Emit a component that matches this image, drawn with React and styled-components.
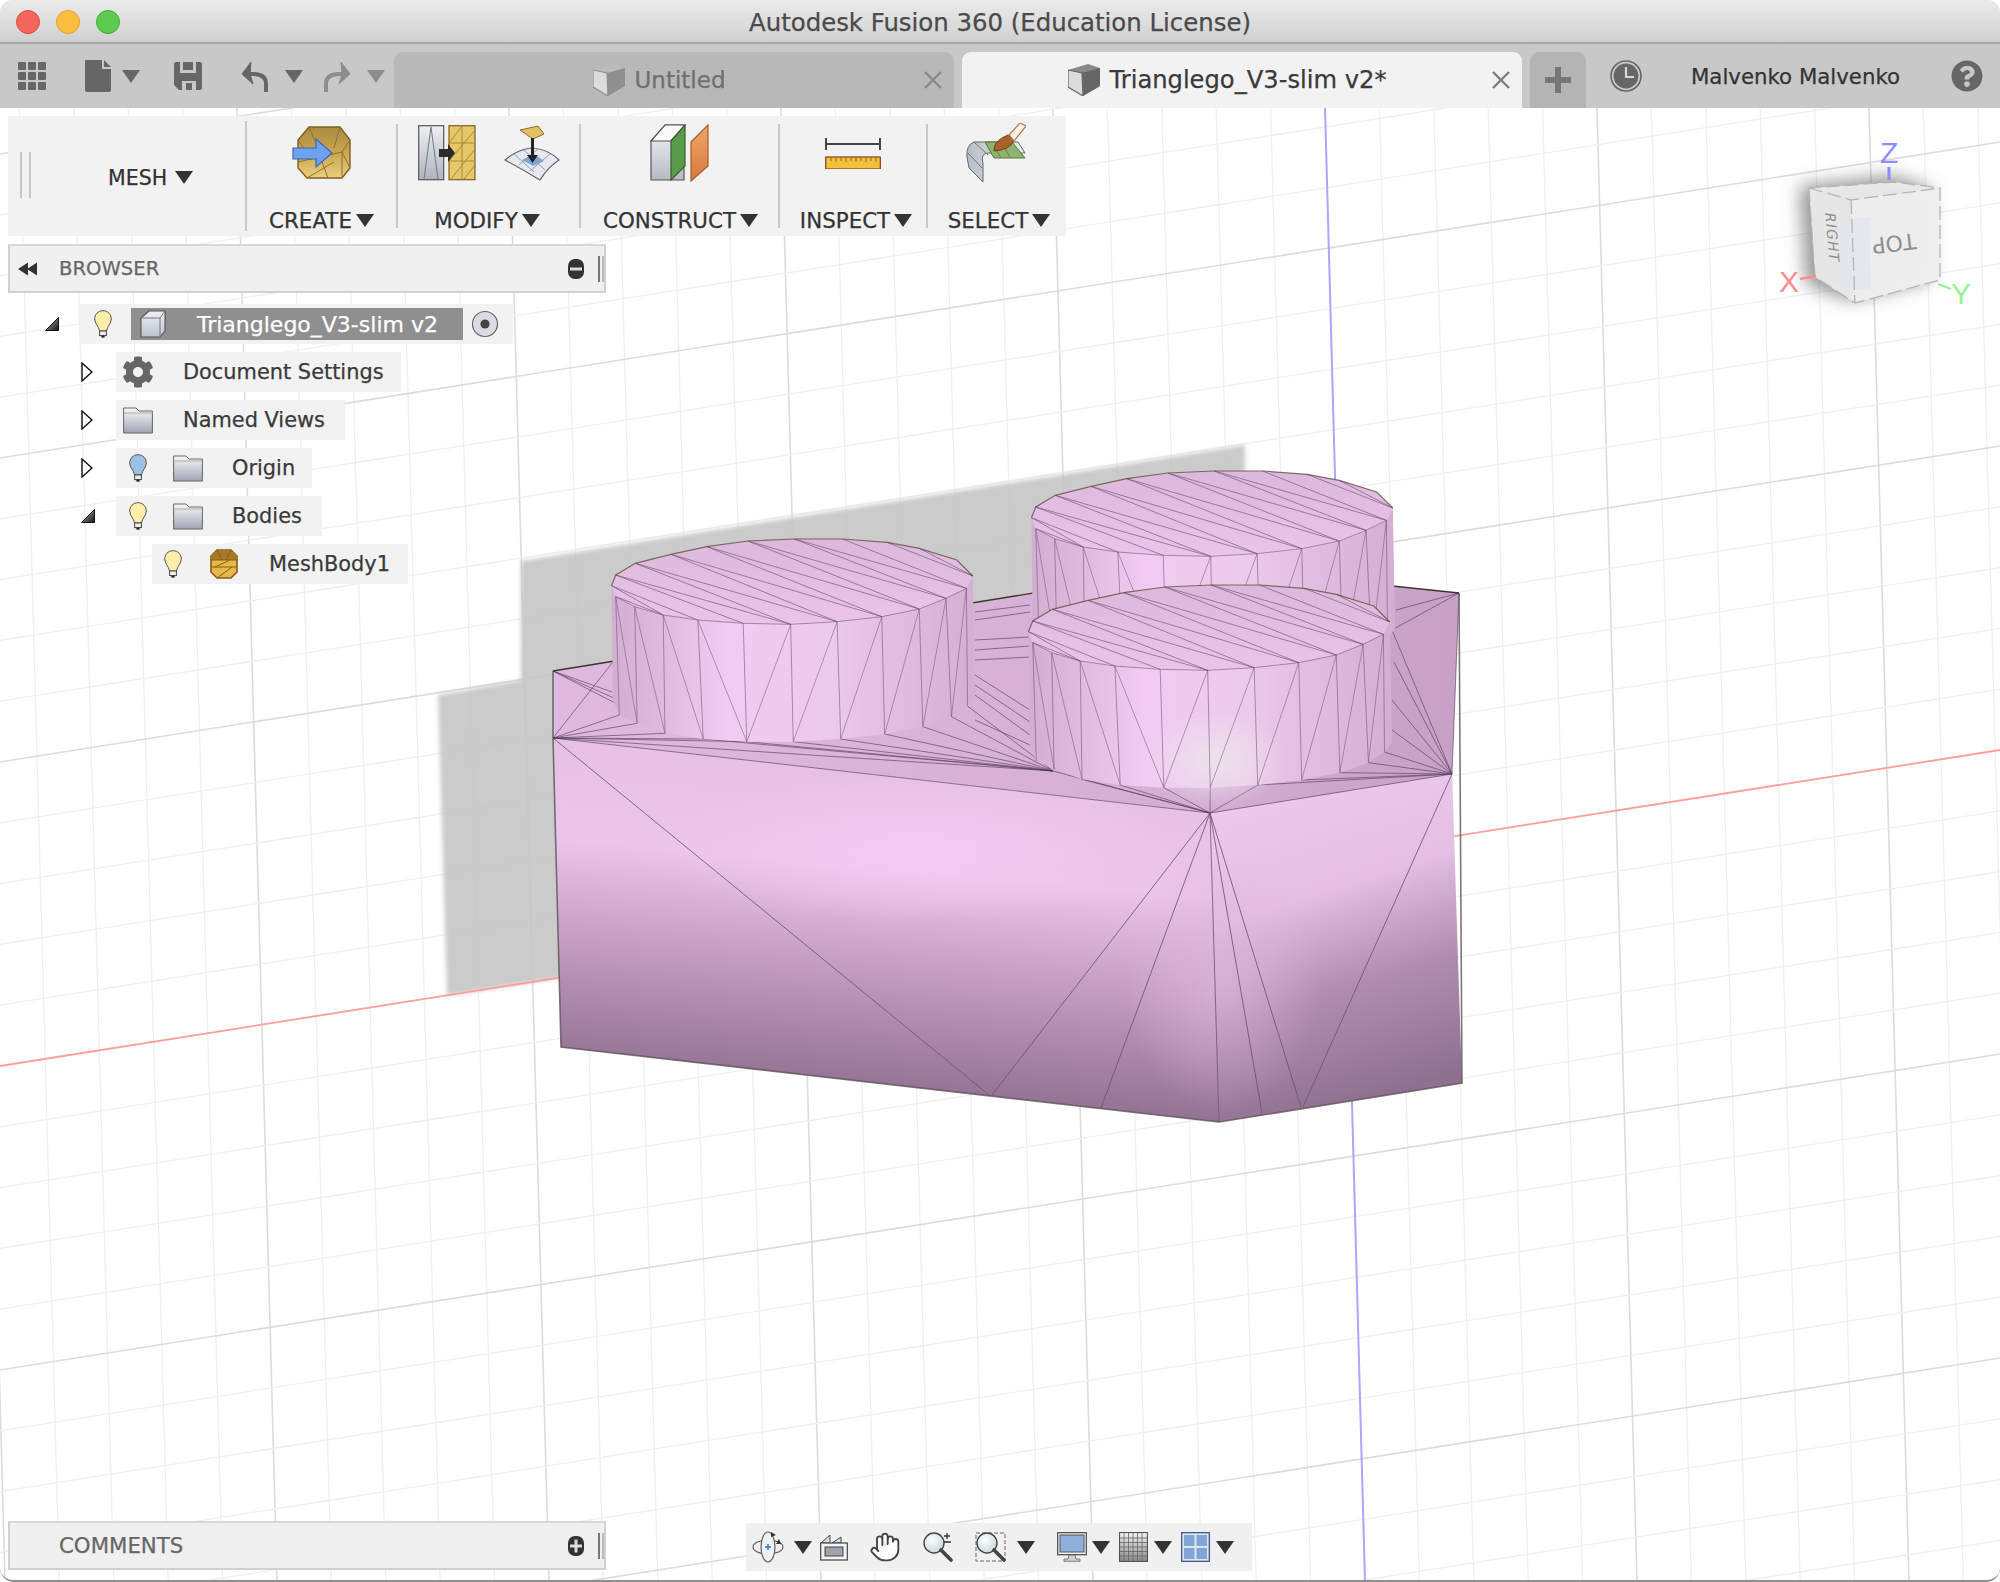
import React from "react";
import styled, { createGlobalStyle } from "styled-components";
import { FaCog, FaQuestionCircle } from "react-icons/fa";
import { Hand } from "lucide-react";

const GlobalStyle = createGlobalStyle`
  html, body { margin: 0; padding: 0; background: #fff; }
  * { box-sizing: border-box; }
  body {
    font-family: "DejaVu Sans", "Liberation Sans", sans-serif;
    -webkit-text-stroke: 0.25px currentColor;
  }
`;

const Window = styled.div`
  width: 2000px;
  height: 1582px;
  display: flex;
  flex-direction: column;
  overflow: hidden;
  border-radius: 12px 12px 14px 14px;
  border-bottom: 2px solid #8f8f8f;
  background: #fff;
`;

const TitleBar = styled.div`
  height: 44px;
  flex: none;
  display: flex;
  align-items: center;
  position: relative;
  justify-content: center;
  padding-top: 3px;
  background: linear-gradient(#ebebeb, #d0d0d0);
  border-bottom: 2px solid #a8a8a8;
`;

const Lights = styled.div`
  position: absolute;
  left: 16px;
  top: 10px;
  display: flex;
  gap: 16px;
`;

const Light = styled.span`
  width: 24px;
  height: 24px;
  border-radius: 50%;
  background: ${(p) => p.$color};
  border: 1px solid ${(p) => p.$edge};
`;

const Title = styled.div`
  font-size: 24.4px;
  color: #4a4a4a;
`;

const TabBar = styled.div`
  height: 64px;
  flex: none;
  display: flex;
  align-items: flex-end;
  background: #c8c8c8;
`;

const Tools = styled.div`
  width: 394px;
  height: 64px;
  flex: none;
  display: flex;
  align-items: center;
  padding: 0 0 0 18px;
`;

const Slot = styled.span`
  display: flex;
  align-items: center;
  justify-content: center;
  flex: none;
  margin-left: ${(p) => p.$ml || 0}px;
`;

const Caret = styled.span`
  display: block;
  flex: none;
  width: 0;
  height: 0;
  border-left: ${(p) => (p.$w || 18) / 2}px solid transparent;
  border-right: ${(p) => (p.$w || 18) / 2}px solid transparent;
  border-top: ${(p) => p.$h || 13}px solid ${(p) => p.$color || "#333"};
  margin-left: ${(p) => p.$ml || 0}px;
`;

const Tab = styled.div`
  width: ${(p) => p.$w}px;
  height: 56px;
  flex: none;
  display: flex;
  align-items: center;
  margin-right: 8px;
  border-radius: 9px 9px 0 0;
  padding-right: 12px;
  background: ${(p) => (p.$active ? "#f2f2f2" : "#b8b8b8")};
`;

const TabLabel = styled.div`
  flex: 1;
  display: flex;
  align-items: center;
  justify-content: center;
  gap: 10px;
  font-size: ${(p) => (p.$active ? 24.2 : 23)}px;
  color: ${(p) => (p.$active ? "#3a3a3a" : "#6f6f6f")};
`;

const PlusTab = styled.div`
  width: 56px;
  height: 56px;
  flex: none;
  display: flex;
  align-items: center;
  justify-content: center;
  border-radius: 9px 9px 0 0;
  background: #b4b4b4;
`;

const UserArea = styled.div`
  height: 64px;
  display: flex;
  align-items: center;
`;

const UserName = styled.div`
  margin-left: 49px;
  width: 208px;
  font-size: 21.3px;
  color: #333;
  white-space: nowrap;
`;

const Viewport = styled.div`
  position: relative;
  flex: 1;
  min-height: 0;
  display: flex;
  flex-direction: column;
  overflow: hidden;
  padding-left: 8px;
`;

const Scene = styled.svg`
  position: absolute;
  left: 0;
  top: 0;
`;

const Toolbar = styled.div`
  position: relative;
  flex: none;
  width: 1058px;
  height: 120px;
  margin-top: 8px;
  display: flex;
  background: #f2f2f2;
`;

const MeshGroup = styled.div`
  width: 237px;
  display: flex;
  align-items: center;
  padding: 0 0 0 12px;
`;

const Grip = styled.span`
  flex: none;
  width: 11px;
  height: 46px;
  border-left: 2px solid #c6c6c6;
  border-right: 2px solid #c6c6c6;
  margin-top: -2px;
`;

const MeshLabel = styled.div`
  display: flex;
  align-items: center;
  margin-left: 77px;
  margin-top: 3px;
  font-size: 20.5px;
  color: #333;
`;

const Sep = styled.span`
  flex: none;
  width: 2px;
  height: ${(p) => p.$h || 104}px;
  align-self: center;
  background: #c9c9c9;
`;

const ToolGroup = styled.div`
  width: ${(p) => p.$w}px;
  flex: none;
  display: flex;
  flex-direction: column;
  align-items: center;
`;

const GroupIcons = styled.div`
  height: 92px;
  display: flex;
  align-items: center;
  justify-content: center;
  gap: 28px;
  padding-bottom: 18px;
`;

const GroupLabel = styled.div`
  display: flex;
  align-items: center;
  gap: 4px;
  font-size: 21.4px;
  color: #333;
  margin-left: ${(p) => p.$ml || 0}px;
  white-space: nowrap;
`;

const Panel = styled.div`
  position: relative;
  flex: none;
  width: 598px;
  height: 49px;
  display: flex;
  align-items: center;
  background: #f0f0f0;
  border: 2px solid #d0d0d0;
  border-top-color: #d8d8d8;
  padding-left: 8px;
`;

const BrowserPanel = styled(Panel)`
  margin-top: 8px;
`;

const PanelName = styled.div`
  flex: 1;
  font-size: ${(p) => p.$fs}px;
  color: #666;
  margin-left: ${(p) => p.$ml}px;
`;

const PanelGrip = styled.span`
  width: 6px;
  height: 26px;
  margin: 0 0 0 14px;
  border-left: 2px solid #777;
  border-right: 2px solid #bbb;
`;

const Tree = styled.div`
  flex: none;
  margin-top: 11px;
  display: flex;
  flex-direction: column;
  gap: 8px;
  position: relative;
`;

const TreeRow = styled.div`
  display: flex;
  align-items: center;
  height: 40px;
  padding-left: ${(p) => 37 + p.$level * 36}px;
`;

const Expander = styled.span`
  width: 35px;
  flex: none;
  display: flex;
`;

const RowBox = styled.div`
  display: flex;
  align-items: center;
  height: 40px;
  background: #f2f2f2;
  padding-left: ${(p) => p.$pl}px;
  padding-right: ${(p) => p.$pr}px;
  margin-left: ${(p) => p.$ml || 0}px;
`;

const RowText = styled.span`
  margin-left: ${(p) => p.$ml}px;
  font-size: 20.9px;
  color: #3a3a3a;
  white-space: nowrap;
`;

const RootLabel = styled.div`
  width: 332px;
  height: 32px;
  display: flex;
  align-items: center;
  margin-left: 19px;
  padding-left: 9px;
  background: #8f8f8f;
  color: #fff;
  font-size: 22px;
`;

const RootText = styled.span`
  margin-left: 31px;
  white-space: nowrap;
`;

const Spacer = styled.div`
  flex: 1;
`;

const BottomRow = styled.div`
  position: relative;
  flex: none;
  display: flex;
  align-items: flex-start;
  margin-bottom: 9px;
`;

const NavBar = styled.div`
  margin-left: 140px;
  margin-top: 2px;
  width: 506px;
  height: 48px;
  display: flex;
  align-items: center;
  background: #f0f0f0;
`;

/* ---------- small icons ---------- */

const AppsIcon = () => (
  <svg width="28" height="28" viewBox="0 0 28 28" fill="#666">
    {[0, 10, 20].map((y) =>
      [0, 10, 20].map((x) => <rect key={`${x}-${y}`} x={x} y={y} width="8" height="8" rx="1" />)
    )}
  </svg>
);

const DocIcon = () => (
  <svg width="26" height="32" viewBox="0 0 26 32">
    <path d="M1 0H17V9H26V30Q26 32 24 32H2Q0 32 0 30V1Q0 0 1 0Z" fill="#666" />
    <path d="M19 0L26 7H19Z" fill="#666" />
  </svg>
);

const SaveIcon = () => (
  <svg width="28" height="28" viewBox="0 0 28 28">
    <path d="M2 0H26Q28 0 28 2V26Q28 28 26 28H5L0 23V2Q0 0 2 0Z" fill="#666" />
    <path d="M6 0H22V11H6Z" fill="#c8c8c8" />
    <path d="M9 0H19V8H9Z" fill="#666" />
    <path d="M8 19H22V28H8Z" fill="#c8c8c8" />
    <path d="M12 21H18V28H12Z" fill="#666" />
  </svg>
);

const ArrowIcon = ({ flip, color }) => (
  <svg width="27" height="32" viewBox="0 0 27 32" style={flip ? { transform: "scaleX(-1)" } : undefined}>
    <path d="M25 32V24Q25 14 12 14H6" fill="none" stroke={color} strokeWidth="4" />
    <path d="M10 2L1 14L12 24L9 14Z" fill={color} stroke={color} strokeWidth="1" />
  </svg>
);

const DocCube = ({ face, side }) => (
  <svg width="32" height="32" viewBox="0 0 32 32">
    <path d="M0 6L20 0L32 4V22L15 32L0 23Z" fill={face} />
    <path d="M14 9L32 4V22L15 32Z" fill={side} />
    <path d="M0 6L14 9L15 32L0 23Z" fill="#dcdcdc" stroke={side} strokeWidth="1.2" />
  </svg>
);

const CloseIcon = ({ color }) => (
  <svg width="18" height="18" viewBox="0 0 18 18">
    <path d="M1 1L17 17M17 1L1 17" stroke={color} strokeWidth="2.4" />
  </svg>
);

const PlusIcon = () => (
  <svg width="26" height="26" viewBox="0 0 26 26">
    <path d="M10 0H16V10H26V16H16V26H10V16H0V10H10Z" fill="#777" />
  </svg>
);

const ClockIcon = () => (
  <svg width="32" height="36" viewBox="0 0 32 36">
    <circle cx="16" cy="18" r="15" fill="none" stroke="#666" strokeWidth="1.6" />
    <circle cx="16" cy="18" r="12.4" fill="#666" />
    <path d="M16 9V19H24" fill="none" stroke="#d8d8d8" strokeWidth="2.2" />
  </svg>
);

const CollapseIcon = () => (
  <svg width="20" height="16" viewBox="0 0 20 16" fill="#333">
    <path d="M0 8L10 1.5V14.5Z" />
    <path d="M9 8L19 1.5V14.5Z" />
  </svg>
);

const RoundGlyph = ({ plus }) => (
  <svg width="16" height="20" viewBox="0 0 16 20">
    <rect x="0" y="0" width="16" height="20" rx="7" fill="#333" />
    <rect x="2" y="8.5" width="12" height="3" fill="#ddd" />
    {plus && <rect x="6.5" y="3.5" width="3" height="13" fill="#ddd" />}
  </svg>
);

const OpenArrow = () => (
  <svg width="12" height="20" viewBox="0 0 12 20">
    <path d="M1 1L11 10L1 19Z" fill="#fff" stroke="#111" strokeWidth="1.4" />
  </svg>
);

const DownArrow = () => (
  <svg width="14" height="14" viewBox="0 0 14 14">
    <defs>
      <linearGradient id="downFill" x1="0" y1="0" x2="1" y2="1">
        <stop offset="0" stopColor="#bbb" />
        <stop offset="1" stopColor="#111" />
      </linearGradient>
    </defs>
    <path d="M13.5 0.5V13.5H0.5Z" fill="url(#downFill)" stroke="#111" strokeWidth="1" />
  </svg>
);

const Bulb = ({ blue }) => (
  <svg width="18" height="28" viewBox="0 0 18 28">
    <path
      d="M9 0.7C4 0.7 0.7 4.6 0.7 9C0.7 13.5 4.6 16 5.6 21H12.4C13.4 16 17.3 13.5 17.3 9C17.3 4.6 14 0.7 9 0.7Z"
      fill={blue ? "#9dc0e6" : "#fdeeaa"}
      stroke="#555"
      strokeWidth="1"
    />
    <rect x="5.6" y="21" width="6.8" height="4.6" fill="#eee" stroke="#444" strokeWidth="1" />
    <rect x="7.4" y="25.6" width="3.2" height="2" fill="#222" />
  </svg>
);

const FolderIcon = ({ id }) => (
  <svg width="30" height="27" viewBox="0 0 30 27">
    <defs>
      <linearGradient id={id} x1="0" y1="0" x2="0" y2="1">
        <stop offset="0" stopColor="#fafafa" />
        <stop offset="1" stopColor="#9ea4b2" />
      </linearGradient>
    </defs>
    <path d="M0.6 1H13L16 4H29.4V26H0.6Z" fill={`url(#${id})`} stroke="#666" strokeWidth="1" />
    <path d="M0.6 6H29.4" stroke="#aaa" strokeWidth="1" />
  </svg>
);

const BodyCube = () => (
  <svg width="26" height="28" viewBox="0 0 26 28">
    <defs>
      <linearGradient id="bodyFace" x1="0" y1="0" x2="0" y2="1">
        <stop offset="0" stopColor="#eef0f4" />
        <stop offset="1" stopColor="#bcc2ce" />
      </linearGradient>
    </defs>
    <path d="M1 8L9 1H25V21L20 27H1Z" fill="url(#bodyFace)" stroke="#555" strokeWidth="1.1" strokeLinejoin="round" />
    <path d="M1 8H20V27M20 8L25 1" fill="none" stroke="#777" strokeWidth="1" />
  </svg>
);

const RadioIcon = () => (
  <svg width="28" height="28" viewBox="0 0 28 28">
    <circle cx="14" cy="14" r="12.5" fill="#d9dbe2" stroke="#666" strokeWidth="1.2" />
    <circle cx="14" cy="14" r="4.6" fill="#444" />
  </svg>
);

const MeshBodyIcon = () => (
  <svg width="28" height="30" viewBox="0 0 28 30">
    <path d="M7 1H21L27 7V23L21 29H7L1 23V7Z" fill="#e6b84a" stroke="#8a5a14" strokeWidth="1.6" />
    <path d="M7 1H21L27 7V11H1V7Z" fill="#a87a2c" />
    <path d="M1 11H27M1 18H27M7 1L12 11M21 1L16 11M5 18L20 11M7 29L22 18" stroke="#8a5a14" strokeWidth="1" fill="none" />
  </svg>
);

/* ---------- ribbon icons ---------- */

const CreateIcon = () => (
  <svg width="60" height="54" viewBox="0 0 60 54">
    <defs>
      <linearGradient id="crGold" x1="0" y1="0" x2="0" y2="1">
        <stop offset="0" stopColor="#ad8a3e" />
        <stop offset="0.5" stopColor="#c9a653" />
        <stop offset="1" stopColor="#eccd7a" />
      </linearGradient>
    </defs>
    <path d="M17 1H48L58 14V42L50 52H15L6 42V14Z" fill="url(#crGold)" stroke="#7d6020" strokeWidth="1.4" />
    <path d="M6 36L50 26L58 14M15 52L42 36M50 52V26M17 1L26 22M48 1L42 22M6 14L20 34M58 42L50 26M30 36L36 52" stroke="#8e7230" strokeWidth="1" fill="none" />
    <path d="M1 22H24V13L40 27L24 41V33H1Z" fill="#6ea2ee" stroke="#3a66b4" strokeWidth="1.2" />
  </svg>
);

const ModifyLeftIcon = () => (
  <svg width="58" height="56" viewBox="0 0 58 56">
    <defs>
      <linearGradient id="mdSteel" x1="0" y1="0" x2="0" y2="1">
        <stop offset="0" stopColor="#eceef2" />
        <stop offset="1" stopColor="#aeb4c0" />
      </linearGradient>
    </defs>
    <rect x="0.7" y="0.7" width="25" height="54" fill="url(#mdSteel)" stroke="#555" strokeWidth="1.2" />
    <path d="M13 2L6 54M13 2L20 54" stroke="#777" strokeWidth="1" fill="none" />
    <rect x="31" y="0.7" width="26" height="54" fill="#e7c668" stroke="#7d6020" strokeWidth="1.2" />
    <path d="M31 18H57M31 36H57M31 18L44 1M31 36L57 5M33 54L57 24M46 54L57 40M44 1V54" stroke="#a88c3c" strokeWidth="1" fill="none" />
    <path d="M21 24H30V19L37 28L30 37V32H21Z" fill="#2b2b2b" />
  </svg>
);

const ModifyRightIcon = () => (
  <svg width="56" height="56" viewBox="0 0 56 56">
    <path d="M16 5L34 1L40 9L29 14Z" fill="#e3c163" stroke="#8a6d25" strokeWidth="1" />
    <path d="M1 35Q14 24 28 23Q44 24 55 35Q44 42 36 55Q18 44 1 35Z" fill="#e6e9f0" stroke="#666" strokeWidth="1.2" />
    <path d="M18 35L30 29L40 36L29 41Z" fill="#7ea6dc" />
    <path d="M10 29L30 47M20 25L41 45M34 24L15 40M46 29L26 46" stroke="#8d93a0" strokeWidth="0.9" fill="none" />
    <path d="M27 13H30V30H34L28.5 38L23 30H27Z" fill="#222" />
  </svg>
);

const ConstructIcon = () => (
  <svg width="60" height="58" viewBox="0 0 60 58">
    <defs>
      <linearGradient id="coSteel" x1="0" y1="0" x2="0" y2="1">
        <stop offset="0" stopColor="#f4f5f7" />
        <stop offset="1" stopColor="#b6bac4" />
      </linearGradient>
      <linearGradient id="coOrange" x1="0" y1="0" x2="0" y2="1">
        <stop offset="0" stopColor="#f0a66c" />
        <stop offset="1" stopColor="#d8793c" />
      </linearGradient>
    </defs>
    <path d="M1 17L15 1H34V56H1Z" fill="url(#coSteel)" stroke="#555" strokeWidth="1.2" />
    <path d="M21 17H1L15 1H35L21 17Z" fill="#fafafa" stroke="#555" strokeWidth="1.2" />
    <path d="M21 17L35 1V42L21 56Z" fill="#5c9a4c" stroke="#34602a" strokeWidth="1.2" />
    <path d="M41 18L58 1V42L41 57Z" fill="url(#coOrange)" stroke="#a85c28" strokeWidth="1.2" />
  </svg>
);

const InspectIcon = () => (
  <svg width="56" height="31" viewBox="0 0 56 31">
    <path d="M1 0V12M55 0V12M1 6H55" stroke="#444" strokeWidth="2" fill="none" />
    <rect x="0.7" y="19" width="54.6" height="12" fill="#eec23c" stroke="#8a3a1c" strokeWidth="1.2" />
    <path d="M6 19V23M11 19V24M16 19V23M21 19V24M26 19V23M31 19V24M36 19V23M41 19V24M46 19V23M51 19V24" stroke="#8a6a1c" strokeWidth="1" />
  </svg>
);

const SelectIcon = () => (
  <svg width="60" height="60" viewBox="0 0 60 60">
    <defs>
      <linearGradient id="seSteel" x1="0" y1="0" x2="1" y2="0">
        <stop offset="0" stopColor="#b9bdc8" />
        <stop offset="1" stopColor="#eceef2" />
      </linearGradient>
    </defs>
    <path d="M8 19Q0 22 1 34L3 45L17 59V40Q14 31 22 30H59L52 19Z" fill="url(#seSteel)" stroke="#666" strokeWidth="1" />
    <path d="M19 19H46L59 35H28Z" fill="#8fb36e" stroke="#4e7a3c" strokeWidth="1" />
    <path d="M38 23L44 35M29 25L35 35M8 19L22 32M2 30L16 45" stroke="#6a7d5a" strokeWidth="1" fill="none" />
    <path d="M28 28Q27 18 42 12L48 18Q43 27 28 28Z" fill="#a8622a" stroke="#6e3c14" strokeWidth="1" />
    <path d="M43 12L54 0L60 3L48 18Z" fill="#f6f0e6" stroke="#b07a44" strokeWidth="1.2" />
  </svg>
);

/* ---------- nav bar icons ---------- */

const OrbitIcon = () => (
  <svg width="32" height="32" viewBox="0 0 32 32">
    <ellipse cx="16" cy="16" rx="15" ry="7" fill="none" stroke="#555" strokeWidth="1.1" />
    <ellipse cx="16" cy="16" rx="7" ry="15" fill="#f0f0f0" stroke="#555" strokeWidth="1.1" />
    <path d="M16 13V19M13 16H19" stroke="#2a7ad8" strokeWidth="1.6" />
    <path d="M19 1L24 4L19 6ZM27 8L24 13L29 13Z" fill="#333" />
  </svg>
);

const CameraIcon = () => (
  <svg width="28" height="28" viewBox="0 0 28 28">
    <path d="M1 10L10 2V10ZM12 10L21 4V10Z" fill="#d8dbe2" stroke="#444" strokeWidth="1" />
    <rect x="0.7" y="10" width="26.6" height="17" fill="#f3f3f3" stroke="#444" strokeWidth="1.2" />
    <rect x="5" y="14" width="18" height="9" fill="#9ea4b0" stroke="#444" strokeWidth="1" />
  </svg>
);

const LensIcon = ({ id, plus, frame }) => (
  <svg width="32" height="30" viewBox="0 0 32 30">
    <defs>
      <radialGradient id={id} cx="0.4" cy="0.35" r="0.8">
        <stop offset="0" stopColor="#ffffff" />
        <stop offset="1" stopColor="#bcd2d2" />
      </radialGradient>
    </defs>
    {frame && <rect x="1" y="1" width="29" height="28" fill="none" stroke="#666" strokeWidth="1" strokeDasharray="4 2" />}
    <circle cx="12" cy="11" r="10" fill={`url(#${id})`} stroke="#444" strokeWidth="1.4" />
    <path d="M19 18L29 28" stroke="#444" strokeWidth="3.6" strokeLinecap="round" />
    {plus && <path d="M25 1V7M22 4H28M22 10H29" stroke="#333" strokeWidth="1.3" fill="none" />}
  </svg>
);

const MonitorIcon = () => (
  <svg width="30" height="30" viewBox="0 0 30 30">
    <rect x="0.7" y="0.7" width="28.6" height="22" fill="#f2f2f2" stroke="#444" strokeWidth="1.2" />
    <rect x="3" y="3" width="24" height="17" fill="#8fb0dc" stroke="#555" strokeWidth="1" />
    <path d="M12 23H18L19 27H23V29.3H7V27H11Z" fill="#d0d0d0" stroke="#666" strokeWidth="0.8" />
  </svg>
);

const GridIcon = () => (
  <svg width="29" height="30" viewBox="0 0 29 30">
    <defs>
      <linearGradient id="navGrid" x1="0" y1="0" x2="0" y2="1">
        <stop offset="0" stopColor="#f4f4f4" />
        <stop offset="1" stopColor="#888" />
      </linearGradient>
    </defs>
    <rect x="0.6" y="0.6" width="27.8" height="28.8" fill="url(#navGrid)" stroke="#444" strokeWidth="1" />
    {[5, 9.5, 14, 18.5, 23].map((v) => (
      <path key={v} d={`M${v} 1V29M1 ${v + 1}H28`} stroke="#666" strokeWidth="0.8" />
    ))}
  </svg>
);

const PanesIcon = () => (
  <svg width="29" height="30" viewBox="0 0 29 30">
    <rect x="0.7" y="0.7" width="27.6" height="28.6" fill="#dfe6f0" stroke="#2f4e80" strokeWidth="1.2" />
    <rect x="3" y="3" width="10.5" height="11" fill="#80a6d6" />
    <rect x="15.5" y="3" width="10.5" height="11" fill="#80a6d6" />
    <rect x="3" y="16" width="10.5" height="11" fill="#80a6d6" />
    <rect x="15.5" y="16" width="10.5" height="11" fill="#80a6d6" />
  </svg>
);

/* ---------- 3d view ---------- */

const pts = (list) => list.map((p) => p.join(",")).join(" ");

const Segments = ({ lines, color = "#6d4f6d", width = 1, opacity = 0.75 }) => (
  <path
    d={lines.map(([a, b]) => `M${a[0]} ${a[1]}L${b[0]} ${b[1]}`).join("")}
    fill="none"
    stroke={color}
    strokeWidth={width}
    strokeOpacity={opacity}
  />
);

const Grid = () => {
  const verticals = [];
  for (let n = -25; n <= 13; n++) {
    const x = 1325 + n * 54.4;
    if (n === 0) continue;
    verticals.push({ n, x });
  }
  const horizontals = [];
  for (let n = -16; n <= 14; n++) {
    if (n === 0) continue;
    horizontals.push({ n, y: 845 + n * 60.8 });
  }
  const lineColor = (n) => (n % 5 === 0 ? "#dcdcdc" : "#efefef");
  const lineWidth = (n) => (n % 5 === 0 ? 1.6 : 1.3);
  return (
    <g>
      {verticals.map(({ n, x }) => (
        <line key={n} x1={x} y1="108" x2={x + 40} y2="1582" stroke={lineColor(n)} strokeWidth={lineWidth(n)} />
      ))}
      {horizontals.map(({ n, y }) => (
        <line key={n} x1="0" y1={y + 221} x2="2000" y2={y - 95} stroke={lineColor(n)} strokeWidth={lineWidth(n)} />
      ))}
    </g>
  );
};

const ShadowPlane = () => (
  <polygon
    points="521,561 1245,445 1245,530 800,820 600,972 447,996 438,695 521,680"
    fill="#c4c4c4"
    fillOpacity="0.88"
    filter="url(#softEdge)"
  />
);

const RIM_UP = [[228,437],[240,405],[295,370],[395,343],[495,320],[610,303],[740,297],[875,297],[1000,307],[1090,325],[1195,360],[1240,408]];
const RIM_LOW = [[240,470],[293,500],[373,525],[470,540],[597,550],[730,553],[860,545],[985,530],[1090,507],[1165,475],[1222,445]];
const RIM_BASE = [[250,825],[300,850],[378,880],[485,897],[607,905],[737,905],[870,897],[993,882],[1100,860],[1180,830],[1225,798]];

const studPoint = (p, dx, dy) => [530 + p[0] / 2.8 + dx, 440 + p[1] / 3 + dy];

const studShape = (dx, dy) => ({
  up: RIM_UP.map((p) => studPoint(p, dx, dy)),
  low: RIM_LOW.map((p) => studPoint(p, dx, dy)),
  base: RIM_BASE.map((p) => studPoint(p, dx, dy)),
});

const Stud = ({ dx, dy, glow }) => {
  const { up, low, base } = studShape(dx, dy);
  const side = [up[0], ...low, up[11], studPoint([1246, 770], dx, dy), ...[...base].reverse(), studPoint([232, 780], dx, dy)];
  const top = [...up, ...[...low].reverse()];
  const walls = [];
  low.forEach((p, i) => walls.push([p, base[i]]));
  const diagonals = [[0,1],[1,2],[2,3],[3,4],[5,4],[6,5],[7,6],[8,7],[9,8],[10,9]].map(([a, b]) => [low[a], base[b]]);
  // top cap is split in long thin strips, all running the same way
  const chords = [[up[0], low[3]], [low[0], low[2]], [up[8], up[11]], [up[9], up[11]], [up[0], low[2]]];
  for (let i = 1; i <= 7; i++) {
    chords.push([up[i], low[i + 3]]);
    if (i + 4 <= 10) chords.push([up[i], low[i + 4]]);
  }
  return (
    <g>
      <polygon points={pts(side)} fill="url(#studSide)" />
      {glow && <ellipse cx={up[6][0] + 4} cy={base[5][1] - 28} rx="70" ry="48" fill="url(#studGlow)" />}
      <polygon points={pts(top)} fill="url(#studTop)" />
      <Segments lines={walls} opacity={0.55} />
      <Segments lines={diagonals} opacity={0.5} />
      <Segments lines={chords} opacity={0.62} />
      <polyline points={pts(low)} fill="none" stroke="#6d4f6d" strokeOpacity="0.55" strokeWidth="1" />
      <polyline points={pts(up)} fill="none" stroke="#5b4a3a" strokeOpacity="0.75" strokeWidth="1.2" />
    </g>
  );
};

const Brick = () => {
  const backLeft = [553, 671];
  const backMid = [1200, 566];
  const backRight = [1459, 593];
  const frontLeft = [553, 738];
  const frontMid = [1210, 813];
  const frontRight = [1452, 774];
  const notch = [1053, 771];
  const s1 = studShape(0, 0);
  const s3 = studShape(417, 46);
  const deckFans = [
    ...s1.base.slice(0, 5).map((p) => [frontLeft, p]),
    [frontLeft, notch],
    ...s1.base.slice(3, 11).map((p) => [notch, p]),
    ...s1.up.slice(0, 1).map((p) => [frontLeft, [p[0] + 8, p[1] + 68]]),
    [backLeft, [617, 704]],
    [backLeft, [614, 698]],
    [backLeft, [612, 692]],
    [frontMid, frontLeft],
    [frontMid, notch],
    ...s3.base.slice(2, 7).map((p) => [frontMid, p]),
    ...s3.base.slice(6, 11).map((p) => [frontRight, p]),
    [frontRight, backRight],
    [frontRight, [1392, 630]],
    [frontRight, [1394, 662]],
    [frontRight, [1392, 700]],
    [frontRight, [1392, 730]],
    [backRight, [1392, 630]],
    [backRight, [1396, 610]],
    [[975, 612], [1030, 605]],
    [[975, 620], [1030, 612]],
    [[975, 640], [1030, 637]],
    [[975, 650], [1030, 646]],
    [[975, 660], [1030, 657]],
    [[975, 675], [1030, 710]],
    [[975, 685], [1030, 722]],
    [[975, 695], [1030, 735]],
    [[975, 720], [1030, 745]],
  ];
  const faceLines = [
    [frontLeft, [989, 1095]],
    [frontMid, [992, 1095]],
    [frontMid, [1101, 1108]],
    [frontMid, [1219, 1122]],
    [frontMid, [1262, 1113]],
    [frontMid, [1301, 1107]],
    [frontRight, [1303, 1107]],
    [frontMid, frontRight],
  ];
  return (
    <g>
      <polygon points={pts([frontLeft, frontMid, [1219, 1122], [561, 1047]])} fill="url(#faceLeft)" />
      <ellipse cx="920" cy="850" rx="260" ry="75" fill="url(#faceGlow)" />
      <polygon points={pts([frontMid, frontRight, [1462, 1083], [1219, 1122]])} fill="url(#faceRight)" />
      <ellipse cx="1222" cy="980" rx="100" ry="130" fill="url(#edgeGlow)" />
      <polygon points={pts([backLeft, backMid, backRight, frontRight, frontMid, frontLeft])} fill="url(#deck)" />
      <Segments lines={deckFans} color="#553c55" opacity={0.62} />
      <Segments lines={faceLines} opacity={0.8} />
      <polyline points={pts([backLeft, frontLeft, [561, 1047], [1219, 1122], [1462, 1083], backRight])} fill="none" stroke="#5d5256" strokeOpacity="0.8" strokeWidth="1.6" />
      <polyline points={pts([backLeft, backMid, backRight])} fill="none" stroke="#3f3428" strokeWidth="1.4" />
      <Stud dx={0} dy={0} />
      <Stud dx={420} dy={-68} />
      <Stud dx={417} dy={46} glow />
    </g>
  );
};

const ViewCube = () => (
  <g>
    <polygon points="1800,186 1892,176 1930,188 1930,280 1850,300 1806,284" fill="#666" fillOpacity="0.7" filter="url(#cubeShadow)" />
    <polygon points="1809,188 1894,182 1940,188 1940,280 1855,303 1815,277" fill="#ededed" fillOpacity="0.92" />
    <polygon points="1851,200 1940,188 1940,280 1855,303" fill="#efefef" fillOpacity="0.7" />
    <polygon points="1842,218 1870,218 1871,290 1842,290" fill="#e4e6ec" fillOpacity="0.9" />
    <path d="M1809 188L1851 200L1940 188M1809 188L1815 277L1855 303L1940 280V188L1894 182L1809 188M1851 200L1855 303" fill="none" stroke="#b5b5b5" strokeWidth="1.3" strokeDasharray="14 5" />
    <text x="0" y="0" fontFamily="'DejaVu Sans', sans-serif" fontSize="14" letterSpacing="1.2" fill="#8f8f8f" transform="translate(1825,212) rotate(85) skewX(-14)">RIGHT</text>
    <text x="0" y="0" fontFamily="'DejaVu Sans', sans-serif" fontSize="22" fill="#8f8f8f" transform="translate(1915,233) rotate(173)">TOP</text>
    <text x="1880" y="163" fontFamily="'Liberation Sans', sans-serif" fontSize="30" fill="#8d8dff">Z</text>
    <path d="M1889 167V180" stroke="#8d8dff" strokeWidth="3" />
    <text x="1779" y="292" fontFamily="'Liberation Sans', sans-serif" fontSize="30" fill="#ff8d8d">X</text>
    <path d="M1800 279L1816 276" stroke="#ff8d8d" strokeWidth="2.4" />
    <text x="1951" y="304" fontFamily="'Liberation Sans', sans-serif" fontSize="30" fill="#96f096">Y</text>
    <path d="M1938 284L1951 289" stroke="#96f096" strokeWidth="2.4" />
  </g>
);

const SceneDefs = () => (
  <defs>
    <filter id="softEdge" x="-5%" y="-5%" width="110%" height="110%">
      <feGaussianBlur stdDeviation="2" />
    </filter>
    <filter id="cubeShadow" x="-30%" y="-30%" width="160%" height="160%">
      <feGaussianBlur stdDeviation="9" />
    </filter>
    <linearGradient id="faceLeft" gradientUnits="userSpaceOnUse" x1="800" y1="760" x2="770" y2="1090">
      <stop offset="0" stopColor="#e6c0e6" />
      <stop offset="0.3" stopColor="#ecc5ec" />
      <stop offset="0.58" stopColor="#c7a0c6" />
      <stop offset="1" stopColor="#8f6f90" />
    </linearGradient>
    <linearGradient id="faceRight" gradientUnits="userSpaceOnUse" x1="1240" y1="800" x2="1340" y2="1110">
      <stop offset="0" stopColor="#eec9ef" />
      <stop offset="0.35" stopColor="#e4bee4" />
      <stop offset="0.65" stopColor="#b08db0" />
      <stop offset="1" stopColor="#8f7090" />
    </linearGradient>
    <radialGradient id="faceGlow">
      <stop offset="0" stopColor="#f3cdf5" stopOpacity="0.9" />
      <stop offset="1" stopColor="#f3cdf5" stopOpacity="0" />
    </radialGradient>
    <radialGradient id="edgeGlow">
      <stop offset="0" stopColor="#dcb6dc" stopOpacity="0.7" />
      <stop offset="1" stopColor="#dcb6dc" stopOpacity="0" />
    </radialGradient>
    <linearGradient id="deck" gradientUnits="userSpaceOnUse" x1="553" y1="700" x2="1459" y2="700">
      <stop offset="0" stopColor="#e0b9e0" />
      <stop offset="0.7" stopColor="#d5aed5" />
      <stop offset="1" stopColor="#c6a0c6" />
    </linearGradient>
    <linearGradient id="studSide" x1="0" y1="0" x2="1" y2="0">
      <stop offset="0" stopColor="#d2aed2" />
      <stop offset="0.32" stopColor="#f1cbf3" />
      <stop offset="0.6" stopColor="#eccaec" />
      <stop offset="1" stopColor="#d4aed4" />
    </linearGradient>
    <radialGradient id="studGlow">
      <stop offset="0" stopColor="#ece4ea" stopOpacity="1" />
      <stop offset="1" stopColor="#ece4ea" stopOpacity="0" />
    </radialGradient>
    <linearGradient id="studTop" x1="0" y1="0" x2="0" y2="1">
      <stop offset="0" stopColor="#dcb8dc" />
      <stop offset="1" stopColor="#ebc4eb" />
    </linearGradient>
  </defs>
);

const SceneView = () => (
  <Scene width="2000" height="1474" viewBox="0 108 2000 1474">
    <SceneDefs />
    <Grid />
    <ShadowPlane />
    <line x1="0" y1="1066" x2="2000" y2="750" stroke="#ff9c9c" strokeWidth="1.8" />
    <line x1="1325" y1="108" x2="1365" y2="1582" stroke="#a8a8ff" strokeWidth="2" />
    <Brick />
    <ViewCube />
  </Scene>
);

export default function App() {
  return (
    <Window>
      <GlobalStyle />
      <TitleBar>
        <Lights>
          <Light $color="#f4665c" $edge="#e0483e" />
          <Light $color="#fbbe3f" $edge="#e2a12b" />
          <Light $color="#5ccb4f" $edge="#3fad37" />
        </Lights>
        <Title>Autodesk Fusion 360 (Education License)</Title>
      </TitleBar>
      <TabBar>
        <Tools>
          <Slot><AppsIcon /></Slot>
          <Slot $ml={39}><DocIcon /></Slot>
          <Caret $ml={11} $color="#666" />
          <Slot $ml={34}><SaveIcon /></Slot>
          <Slot $ml={39}><ArrowIcon color="#666" /></Slot>
          <Caret $ml={17} $color="#666" />
          <Slot $ml={21}><ArrowIcon flip color="#8d8d8d" /></Slot>
          <Caret $ml={16} $color="#8d8d8d" />
        </Tools>
        <Tab $w={560}>
          <TabLabel>
            <DocCube face="#bcbcbc" side="#8f8f8f" />
            Untitled
          </TabLabel>
          <CloseIcon color="#8a8a8a" />
        </Tab>
        <Tab $w={560} $active>
          <TabLabel $active>
            <DocCube face="#8a8a8a" side="#666" />
            Trianglego_V3-slim v2*
          </TabLabel>
          <CloseIcon color="#7d7d7d" />
        </Tab>
        <PlusTab><PlusIcon /></PlusTab>
        <UserArea>
          <Slot $ml={24}><ClockIcon /></Slot>
          <UserName>Malvenko Malvenko</UserName>
          <Slot $ml={52}><FaQuestionCircle size={32} color="#666" /></Slot>
        </UserArea>
      </TabBar>
      <Viewport>
        <SceneView />
        <Toolbar>
          <MeshGroup>
            <Grip />
            <MeshLabel>
              MESH
              <Caret $ml={8} />
            </MeshLabel>
          </MeshGroup>
          <Sep $h={110} />
          <ToolGroup $w={149}>
            <GroupIcons><CreateIcon /></GroupIcons>
            <GroupLabel>CREATE <Caret /></GroupLabel>
          </ToolGroup>
          <Sep />
          <ToolGroup $w={181}>
            <GroupIcons><ModifyLeftIcon /><ModifyRightIcon /></GroupIcons>
            <GroupLabel $ml={-3}>MODIFY <Caret /></GroupLabel>
          </ToolGroup>
          <Sep />
          <ToolGroup $w={197}>
            <GroupIcons><ConstructIcon /></GroupIcons>
            <GroupLabel $ml={2}>CONSTRUCT <Caret /></GroupLabel>
          </ToolGroup>
          <Sep />
          <ToolGroup $w={146}>
            <GroupIcons><InspectIcon /></GroupIcons>
            <GroupLabel $ml={6}>INSPECT <Caret /></GroupLabel>
          </ToolGroup>
          <Sep />
          <ToolGroup $w={136}>
            <GroupIcons><SelectIcon /></GroupIcons>
            <GroupLabel $ml={6}>SELECT <Caret /></GroupLabel>
          </ToolGroup>
        </Toolbar>
        <BrowserPanel>
          <CollapseIcon />
          <PanelName $ml={21} $fs={19.6}>BROWSER</PanelName>
          <RoundGlyph />
          <PanelGrip />
        </BrowserPanel>
        <Tree>
          <TreeRow $level={0}>
            <Expander><DownArrow /></Expander>
            <RowBox $pl={14} $pr={14}>
              <Bulb />
              <RootLabel>
                <BodyCube />
                <RootText>Trianglego_V3-slim v2</RootText>
              </RootLabel>
              <Slot $ml={8}><RadioIcon /></Slot>
            </RowBox>
          </TreeRow>
          <TreeRow $level={1}>
            <Expander><OpenArrow /></Expander>
            <RowBox $pl={6} $pr={17}>
              <FaCog size={32} color="#666" />
              <RowText $ml={29}>Document Settings</RowText>
            </RowBox>
          </TreeRow>
          <TreeRow $level={1}>
            <Expander><OpenArrow /></Expander>
            <RowBox $pl={7} $pr={20}>
              <FolderIcon id="folderViews" />
              <RowText $ml={30}>Named Views</RowText>
            </RowBox>
          </TreeRow>
          <TreeRow $level={1}>
            <Expander><OpenArrow /></Expander>
            <RowBox $pl={13} $pr={17}>
              <Bulb blue />
              <Slot $ml={26}><FolderIcon id="folderOrigin" /></Slot>
              <RowText $ml={29}>Origin</RowText>
            </RowBox>
          </TreeRow>
          <TreeRow $level={1}>
            <Expander><DownArrow /></Expander>
            <RowBox $pl={13} $pr={20}>
              <Bulb />
              <Slot $ml={26}><FolderIcon id="folderBodies" /></Slot>
              <RowText $ml={29}>Bodies</RowText>
            </RowBox>
          </TreeRow>
          <TreeRow $level={2}>
            <Expander />
            <RowBox $pl={12} $pr={18}>
              <Bulb />
              <Slot $ml={28}><MeshBodyIcon /></Slot>
              <RowText $ml={31}>MeshBody1</RowText>
            </RowBox>
          </TreeRow>
        </Tree>
        <Spacer />
        <BottomRow>
          <Panel>
            <PanelName $ml={41} $fs={21.3}>COMMENTS</PanelName>
            <RoundGlyph plus />
            <PanelGrip />
          </Panel>
          <NavBar>
            <Slot $ml={6}><OrbitIcon /></Slot>
            <Caret $ml={10} />
            <Slot $ml={8}><CameraIcon /></Slot>
            <Slot $ml={21}><Hand size={32} strokeWidth={1.4} color="#444" fill="#fff" /></Slot>
            <Slot $ml={21}><LensIcon id="lensPlus" plus /></Slot>
            <Slot $ml={21}><LensIcon id="lensFrame" frame /></Slot>
            <Caret $ml={10} />
            <Slot $ml={22}><MonitorIcon /></Slot>
            <Caret $ml={5} />
            <Slot $ml={9}><GridIcon /></Slot>
            <Caret $ml={6} />
            <Slot $ml={9}><PanesIcon /></Slot>
            <Caret $ml={6} />
          </NavBar>
        </BottomRow>
      </Viewport>
    </Window>
  );
}
